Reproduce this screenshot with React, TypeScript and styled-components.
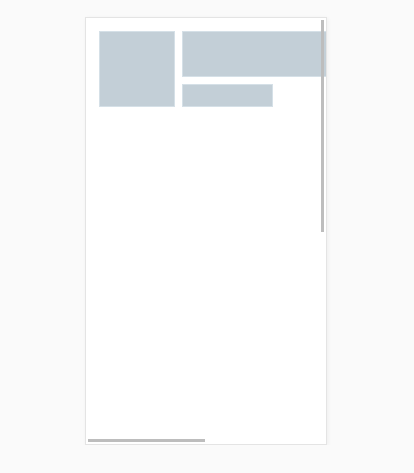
import React from "react";
import styled, { createGlobalStyle } from "styled-components";

const Global = createGlobalStyle`
  html, body { margin: 0; padding: 0; background: #fafafa; font-family: "Liberation Sans", Arial, sans-serif; }
`;

const Page = styled.div`
  padding: 17px 0 0 85px;
`;

const Card = styled.div`
  position: relative;
  box-sizing: border-box;
  width: 242px;
  height: 428px;
  background: #ffffff;
  border: 1px solid #e4e4e4;
  box-shadow: 1px 1px 4px rgba(0, 0, 0, 0.05);
  overflow: hidden;
`;

const Content = styled.div`
  display: flex;
  gap: 7px;
  padding: 13px;
`;

const Column = styled.div`
  display: flex;
  flex-direction: column;
  gap: 7px;
`;

const Block = styled.div<{ $w: number; $h: number }>`
  box-sizing: border-box;
  flex: none;
  width: ${(p) => p.$w}px;
  height: ${(p) => p.$h}px;
  background: #c3cfd7;
  border: 1px solid #d5e0e7;
`;

const VThumb = styled.div`
  position: absolute;
  top: 2px;
  right: 2px;
  width: 3px;
  height: 212px;
  background: #bdbdbd;
`;

const HThumb = styled.div`
  position: absolute;
  left: 2px;
  bottom: 2px;
  width: 117px;
  height: 3px;
  background: #bdbdbd;
`;

export default function App() {
  return (
    <>
      <Global />
      <Page>
        <Card>
          <Content>
            <Block $w={76} $h={76} />
            <Column>
              <Block $w={170} $h={46} />
              <Block $w={91} $h={23} />
            </Column>
          </Content>
          <VThumb />
          <HThumb />
        </Card>
      </Page>
    </>
  );
}
